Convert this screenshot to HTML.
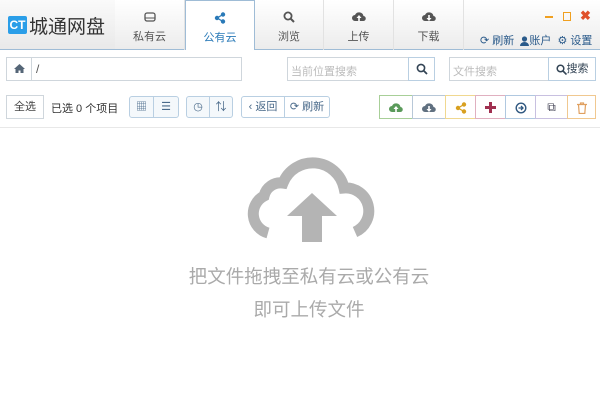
<!DOCTYPE html>
<html><head><meta charset="utf-8"><style>
*{box-sizing:border-box;margin:0;padding:0}
body{width:600px;height:402px;background:#fff;font-family:"Liberation Sans","Noto Sans CJK SC",sans-serif;font-size:12px;color:#333;position:relative;overflow:hidden}
.abs{position:absolute}
.hdr{left:0;top:0;width:600px;height:50px;background:linear-gradient(#fff,#ececec);border-bottom:1px solid #9fbcd6}
.tab{top:0;height:50px;width:70px;border-right:1px solid #e2e2e2;text-align:center;color:#555;font-size:11px}
.tab .ic{position:absolute;top:9px;left:0;width:100%;font-size:12px;color:#555}
.tab .lb{position:absolute;top:28px;left:0;width:100%}
.box{border:1px solid #cfd6dc;background:#fff}
.btn{border:1px solid #b9cfe2;border-radius:3px;background:#f4f8fb;color:#4a6a8a;font-size:11px;text-align:center;line-height:21px}
.rb{top:95px;height:24px;border:1px solid;background:#fff;text-align:center;line-height:22px;font-size:12px}
svg{vertical-align:middle}
</style></head><body>
<div class="abs hdr"></div>
<div class="abs" style="left:0;top:0;width:115px;height:49px;background:linear-gradient(#fafafa,#e9e9e9)"></div>
<div class="abs" style="left:8px;top:16px;width:19px;height:18px;background:#2a9ee8;border-radius:2px;color:#fff;font-size:12px;font-weight:bold;line-height:18px;text-align:center">CT</div>
<div class="abs" style="left:29px;top:12px;font-size:19px;color:#333">城通网盘</div>
<div class="abs tab" style="left:115px"><div class="ic"><svg width="12" height="10"><rect x="1" y="1" width="10" height="8" rx="2" fill="none" stroke="#555" stroke-width="1.3"/><line x1="1" y1="6" x2="11" y2="6" stroke="#555"/></svg></div><div class="lb">私有云</div></div>
<div class="abs tab" style="left:185px;background:#fff;border:1px solid #9fbcd6;border-bottom:none;height:50px;width:70px;color:#2a7ab8"><div class="ic"><svg width="12" height="12"><g fill="#2a7ab8"><circle cx="9" cy="2.5" r="2.2"/><circle cx="3" cy="6" r="2.2"/><circle cx="9" cy="9.5" r="2.2"/></g><path d="M9 2.5L3 6L9 9.5" stroke="#2a7ab8" stroke-width="1.3" fill="none"/></svg></div><div class="lb" style="color:#2a7ab8">公有云</div></div>
<div class="abs tab" style="left:255px;width:69px"><div class="ic"><svg width="12" height="12"><circle cx="5" cy="5" r="3.6" fill="none" stroke="#555" stroke-width="1.8"/><line x1="7.5" y1="7.5" x2="11" y2="11" stroke="#555" stroke-width="2"/></svg></div><div class="lb">浏览</div></div>
<div class="abs tab" style="left:324px"><div class="ic"><svg width="14" height="11"><path d="M3 10a3 3 0 010-6 4.5 4.5 0 018.5 1A2.5 2.5 0 0111 10z" fill="#555"/><path d="M7 4l-2.5 3h1.7v3h1.6V7h1.7z" fill="#fff"/></svg></div><div class="lb">上传</div></div>
<div class="abs tab" style="left:394px"><div class="ic"><svg width="14" height="11"><path d="M3 10a3 3 0 010-6 4.5 4.5 0 018.5 1A2.5 2.5 0 0111 10z" fill="#555"/><path d="M7 10l-2.5-3h1.7V4h1.6v3h1.7z" fill="#fff"/></svg></div><div class="lb">下载</div></div>
<div class="abs" style="left:545px;top:16px;width:8px;height:2px;background:#f0a020"></div>
<div class="abs" style="left:563px;top:12px;width:8px;height:9px;border:1px solid #f0a020"></div>
<div class="abs" style="left:580px;top:8px;color:#e0502a;font-weight:bold;font-size:13px">✖</div>
<div class="abs" style="left:480px;top:32px;font-size:11px;color:#2a5a8a">⟳ 刷新 &nbsp;<svg width="9" height="10"><circle cx="4.5" cy="3" r="2.6" fill="#2a5a8a"/><path d="M0 10a4.5 4 0 019 0z" fill="#2a5a8a"/></svg>账户 &nbsp;⚙ 设置</div>

<div class="abs box" style="left:6px;top:57px;width:236px;height:24px"></div>
<div class="abs box" style="left:6px;top:57px;width:26px;height:24px;text-align:center;line-height:20px"><svg width="11" height="9"><path d="M5.5 0L0 5h1.5v4h3V6.5h2V9h3V5H11z" fill="#567"/></svg></div>
<div class="abs" style="left:36px;top:62px;color:#555">/</div>
<div class="abs box" style="left:287px;top:57px;width:122px;height:24px;color:#bbb;font-size:11px;padding:5px 0 0 3px">当前位置搜索</div>
<div class="abs box" style="left:408px;top:57px;width:27px;height:24px;border-color:#b9cfe2;text-align:center;line-height:20px"><svg width="12" height="12"><circle cx="5" cy="5" r="3.6" fill="none" stroke="#345" stroke-width="1.6"/><line x1="7.5" y1="7.5" x2="11" y2="11" stroke="#345" stroke-width="1.8"/></svg></div>
<div class="abs box" style="left:449px;top:57px;width:100px;height:24px;color:#bbb;font-size:11px;padding:5px 0 0 3px">文件搜索</div>
<div class="abs box" style="left:548px;top:57px;width:48px;height:24px;border-color:#b9cfe2;text-align:center;line-height:22px;color:#345;font-size:11px"><svg width="11" height="11"><circle cx="4.5" cy="4.5" r="3.3" fill="none" stroke="#345" stroke-width="1.5"/><line x1="7" y1="7" x2="10.5" y2="10.5" stroke="#345" stroke-width="1.6"/></svg>搜索</div>

<div class="abs box" style="left:6px;top:95px;width:38px;height:24px;text-align:center;line-height:22px;font-size:11px;color:#444">全选</div>
<div class="abs" style="left:51px;top:100px;font-size:11px;color:#333">已选 0 个项目</div>
<div class="abs btn" style="left:129px;top:96px;width:50px;height:22px"><span style="display:inline-block;width:24px;border-right:1px solid #b9cfe2">▦</span><span style="display:inline-block;width:24px">☰</span></div>
<div class="abs btn" style="left:186px;top:96px;width:47px;height:22px"><span style="display:inline-block;width:23px;border-right:1px solid #b9cfe2">◷</span><span style="display:inline-block;width:22px">⇅</span></div>
<div class="abs btn" style="left:241px;top:96px;width:89px;height:22px;background:#fff"><span style="display:inline-block;width:43px;border-right:1px solid #b9cfe2">‹ 返回</span><span style="display:inline-block;width:44px">⟳ 刷新</span></div>

<div class="abs rb" style="left:379px;width:34px;border-color:#a8cf98"><svg width="14" height="11"><path d="M3 10a3 3 0 010-6 4.5 4.5 0 018.5 1A2.5 2.5 0 0111 10z" fill="#5a9a5a"/><path d="M7 4l-2.5 3h1.7v3h1.6V7h1.7z" fill="#fff"/></svg></div>
<div class="abs rb" style="left:412px;width:34px;border-color:#b8c8d8"><svg width="14" height="11"><path d="M3 10a3 3 0 010-6 4.5 4.5 0 018.5 1A2.5 2.5 0 0111 10z" fill="#607080"/><path d="M7 10l-2.5-3h1.7V4h1.6v3h1.7z" fill="#fff"/></svg></div>
<div class="abs rb" style="left:445px;width:31px;border-color:#f0d890"><svg width="12" height="12"><g fill="#d8a020"><circle cx="9" cy="2.5" r="2.2"/><circle cx="3" cy="6" r="2.2"/><circle cx="9" cy="9.5" r="2.2"/></g><path d="M9 2.5L3 6L9 9.5" stroke="#d8a020" stroke-width="1.3" fill="none"/></svg></div>
<div class="abs rb" style="left:475px;width:31px;border-color:#e0b0c0"><svg width="11" height="11"><path d="M4 0h3v4h4v3H7v4H4V7H0V4h4z" fill="#a03050"/></svg></div>
<div class="abs rb" style="left:505px;width:31px;border-color:#b0c8e0"><svg width="12" height="12"><circle cx="6" cy="6" r="4.8" fill="none" stroke="#305880" stroke-width="1.4"/><path d="M3.5 6h4M6 4l2 2-2 2" fill="none" stroke="#305880" stroke-width="1.3"/></svg></div>
<div class="abs rb" style="left:535px;width:33px;border-color:#c8c0e0;color:#445">⧉</div>
<div class="abs rb" style="left:567px;width:29px;border-color:#f0c890"><svg width="10" height="12"><path d="M0 2.5h10M3.5 2.5V1h3v1.5M1.5 2.5l.7 9h5.6l.7-9" fill="none" stroke="#e0a060" stroke-width="1.2"/></svg></div>
<div class="abs" style="left:0;top:127px;width:600px;height:1px;background:#e8e8e8"></div>

<svg class="abs" style="left:0;top:0" width="600" height="402">
<path d="M268 233A20 20 0 0 1 264 196A17 17 0 0 1 283 183A32 32 0 0 1 344 188A23 23 0 0 1 355 232" fill="none" stroke="#b4b4b4" stroke-width="11"/>
<path d="M312 193L287 216H302V242H322V216H337Z" fill="#b4b4b4"/>
</svg>
<div class="abs" style="left:0;top:263px;width:618px;text-align:center;font-size:18.5px;color:#aaa">把文件拖拽至私有云或公有云</div>
<div class="abs" style="left:0;top:296px;width:618px;text-align:center;font-size:18.5px;color:#aaa">即可上传文件</div>
</body></html>
